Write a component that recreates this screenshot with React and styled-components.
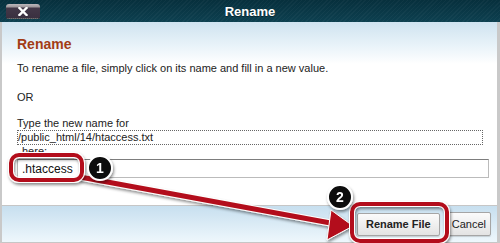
import React from 'react';
import styled, { createGlobalStyle } from 'styled-components';

const GlobalStyle = createGlobalStyle`
  html, body {
    margin: 0;
    padding: 0;
    background: #fff;
  }
  body {
    font-family: 'Liberation Sans', Arial, sans-serif;
    color: #222;
  }
`;

const Dialog = styled.div`
  position: relative;
  width: 500px;
  height: 243px;
  overflow: hidden;
  display: flex;
  flex-direction: column;
  background: #fff;
`;

const TitleBar = styled.div`
  height: 22px;
  flex: none;
  display: grid;
  grid-template-columns: 1fr auto 1fr;
  align-items: center;
  background:
    repeating-linear-gradient(135deg, rgba(255, 255, 255, 0.03) 0 1px, transparent 1px 3px),
    linear-gradient(#07303d, #0d4050);
`;

const CloseButton = styled.button`
  justify-self: start;
  margin: 1px 0 0 6px;
  width: 34px;
  height: 15px;
  padding: 0;
  border: none;
  border-bottom: 1px dotted #111;
  border-radius: 3px 3px 2px 2px;
  background: linear-gradient(#bdb8bc 0, #9d979b 3px, #433848 4px, #3a3040 100%);
  display: flex;
  align-items: center;
  justify-content: center;
  cursor: pointer;
`;

const Title = styled.div`
  color: #fff;
  font-weight: bold;
  font-size: 13px;
  text-shadow: 0 1px 0 rgba(0, 0, 0, 0.4);
`;

const Frame = styled.div`
  flex: 1;
  display: flex;
  flex-direction: column;
  border-left: 2px solid #c9c9c9;
  border-right: 3px solid #c9c9c9;
`;

const Content = styled.div`
  height: 183px;
  padding: 14px 0 0 15px;
  box-sizing: border-box;
  background: linear-gradient(#cfe3f0 0, #e9f3f9 24px, #fff 42px);
`;

const Heading = styled.h2`
  margin: 0;
  font-size: 14px;
  line-height: 16px;
  color: #a23c16;
`;

const Line = styled.p`
  margin: ${(p) => p.$top || 0}px 0 0 ${(p) => p.$indent || 0}px;
  font-size: 11px;
  line-height: 13px;
`;

const PathBox = styled.div`
  width: 464px;
  border: 1px dotted #666;
  font-size: 11px;
  line-height: 13px;
`;

const NameInput = styled.input`
  display: block;
  box-sizing: border-box;
  margin-top: 1px;
  width: 472px;
  height: 19px;
  padding: 0 4px;
  font-family: 'Liberation Sans', Arial, sans-serif;
  font-size: 12px;
  color: #111;
  border: 1px solid #bbb;
  border-top-color: #7d7d7d;
  outline: none;
`;

const Footer = styled.div`
  flex: 1;
  display: flex;
  justify-content: flex-end;
  align-items: center;
  gap: 7px;
  padding-right: 6px;
  border-top: 1px solid #c6c6c6;
  border-bottom: 1px solid #c6c6c6;
  background: linear-gradient(#c7dfef, #eef7fc);
`;

const Button = styled.button`
  height: ${(p) => (p.$primary ? 23 : 24)}px;
  padding: 0 ${(p) => (p.$primary ? 8 : 4)}px;
  font-family: 'Liberation Sans', Arial, sans-serif;
  font-size: 11px;
  font-weight: ${(p) => (p.$primary ? 'bold' : 'normal')};
  color: #222;
  border: 1px solid #a5a5a5;
  border-radius: 2px;
  background: linear-gradient(#fbfbfb, #e3e3e3);
  box-shadow: 0 1px 1px rgba(0, 0, 0, 0.15);
  cursor: pointer;
`;

const Overlay = styled.svg`
  position: absolute;
  left: 0;
  top: 0;
  pointer-events: none;
`;

function Callout({ x, y, n }) {
  return (
    <g filter="url(#shadow)">
      <circle cx={x} cy={y} r="12" fill="#0a0a0a" stroke="#fff" strokeWidth="2" />
      <text
        x={x}
        y={y + 5}
        textAnchor="middle"
        fill="#fff"
        fontSize="14"
        fontWeight="bold"
        fontFamily="'Liberation Sans', Arial, sans-serif"
      >
        {n}
      </text>
    </g>
  );
}

function Highlight({ x, y, w, h }) {
  return (
    <g filter="url(#shadow)">
      <rect x={x} y={y} width={w} height={h} rx="8" fill="none" stroke="#fff" strokeWidth="6" />
      <rect x={x} y={y} width={w} height={h} rx="8" fill="none" stroke="#b3111a" strokeWidth="4" />
    </g>
  );
}

function Annotations() {
  return (
    <Overlay width="500" height="243" viewBox="0 0 500 243">
      <defs>
        <filter id="shadow" x="-20%" y="-20%" width="140%" height="160%">
          <feDropShadow dx="1" dy="2" stdDeviation="1.5" floodColor="#000" floodOpacity="0.45" />
        </filter>
      </defs>
      <g filter="url(#shadow)">
        <line x1="80" y1="177" x2="336" y2="224" stroke="#fff" strokeWidth="7" />
        <line x1="80" y1="177" x2="336" y2="224" stroke="#b3111a" strokeWidth="5" />
        <polygon points="353,226 331,210 327,240" fill="#b3111a" stroke="#fff" strokeWidth="1" />
      </g>
      <Highlight x={11} y={155} w={71} h={25} />
      <Highlight x={352} y={204} w={95} h={37} />
      <Callout x={100} y={168} n="1" />
      <Callout x={340} y={197} n="2" />
    </Overlay>
  );
}

export default function App() {
  return (
    <>
      <GlobalStyle />
      <Dialog>
        <TitleBar>
          <CloseButton aria-label="Close">
            <svg width="10" height="9" viewBox="0 0 10 9">
              <path d="M1.5 1 L8.5 8 M8.5 1 L1.5 8" stroke="#fff" strokeWidth="2.4" strokeLinecap="square" />
            </svg>
          </CloseButton>
          <Title>Rename</Title>
          <span />
        </TitleBar>
        <Frame>
          <Content>
            <Heading>Rename</Heading>
            <Line $top={10}>To rename a file, simply click on its name and fill in a new value.</Line>
            <Line $top={16}>OR</Line>
            <Line $top={13}>Type the new name for</Line>
            <PathBox>/public_html/14/htaccess.txt</PathBox>
            <Line $indent={5}>here:</Line>
            <NameInput defaultValue=".htaccess" />
          </Content>
          <Footer>
            <Button $primary>Rename File</Button>
            <Button>Cancel</Button>
          </Footer>
        </Frame>
        <Annotations />
      </Dialog>
    </>
  );
}
